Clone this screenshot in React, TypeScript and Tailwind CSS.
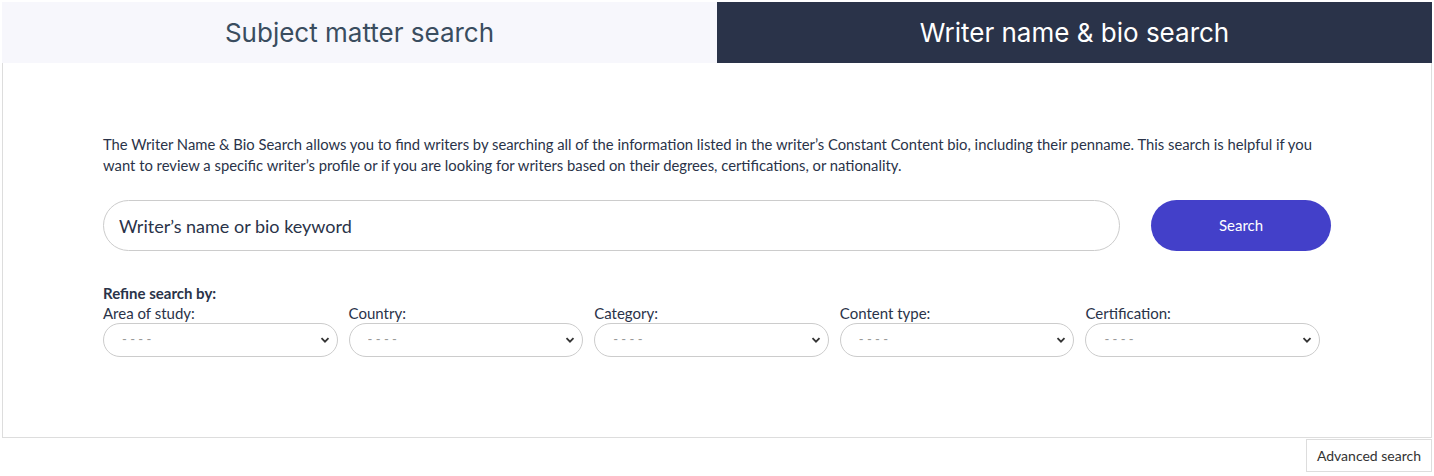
import { useState } from "react";

const selects = ["Area of study:", "Country:", "Category:", "Content type:", "Certification:"];

const Chevron = () => (
  <svg width="10" height="10" viewBox="0 0 10 10" className="pointer-events-none absolute right-[8px] top-1/2 -translate-y-1/2">
    <path d="M1.5 3.2 L5 6.7 L8.5 3.2" fill="none" stroke="#333" strokeWidth="1.8" />
  </svg>
);

export default function App() {
  const [tab, setTab] = useState<"subject" | "writer">("writer");
  const [query, setQuery] = useState("");

  return (
    <div className="bg-white px-[2px] pt-[2px] font-['Lato',sans-serif] text-[#2a3349]">
      <div className="flex h-[61px]">
        <button
          onClick={() => setTab("subject")}
          className={`flex-1 text-[26px] font-['Inter',sans-serif] ${tab === "subject" ? "bg-[#2a3349] text-white" : "bg-[#f7f7fc] text-[#3a4d5f]"}`}
        >
          Subject matter search
        </button>
        <button
          onClick={() => setTab("writer")}
          className={`flex-1 text-[26px] font-['Inter',sans-serif] ${tab === "writer" ? "bg-[#2a3349] text-white" : "bg-[#f7f7fc] text-[#3a4d5f]"}`}
        >
          Writer name &amp; bio search
        </button>
      </div>

      <div className="h-[375px] border-x border-b border-[#dddddd] px-[100px] pt-[71px]">
        <p className="text-[14.8px] leading-[21px] text-[#2a3349]">
          The Writer Name &amp; Bio Search allows you to find writers by searching all of the information listed in the writer’s Constant Content bio, including their penname. This search is helpful if you want to review a specific writer’s profile or if you are looking for writers based on their degrees, certifications, or nationality.
        </p>

        <div className="mt-[24px] flex items-center gap-[31px]">
          <input
            value={query}
            onChange={(e) => setQuery(e.target.value)}
            placeholder="Writer’s name or bio keyword"
            className="h-[51px] flex-1 rounded-full border border-[#cccccc] px-[15px] text-[18px] outline-none placeholder:text-[#2a3349]"
          />
          <button className="h-[51px] w-[180px] rounded-full bg-[#4340c9] text-[15px] text-white">Search</button>
        </div>

        <div className="mb-[2px] mt-[33px] text-[15px] font-bold leading-[18px]">Refine search by:</div>
        <div className="grid grid-cols-5">
          {selects.map((label) => (
            <div key={label} className="pr-[11px]">
              <div className="text-[15px] leading-[19px]">{label}</div>
              <div className="relative">
                <select className="h-[34px] w-full appearance-none rounded-full border border-[#cccccc] bg-white px-[18px] text-[13px] text-[#999999] outline-none">
                  <option>- - - -</option>
                </select>
                <Chevron />
              </div>
            </div>
          ))}
        </div>
      </div>

      <div className="flex justify-end">
        <button className="mt-[1px] h-[33px] border border-[#dddddd] px-[10px] text-[14px] text-[#333333]">
          Advanced search
        </button>
      </div>
    </div>
  );
}
